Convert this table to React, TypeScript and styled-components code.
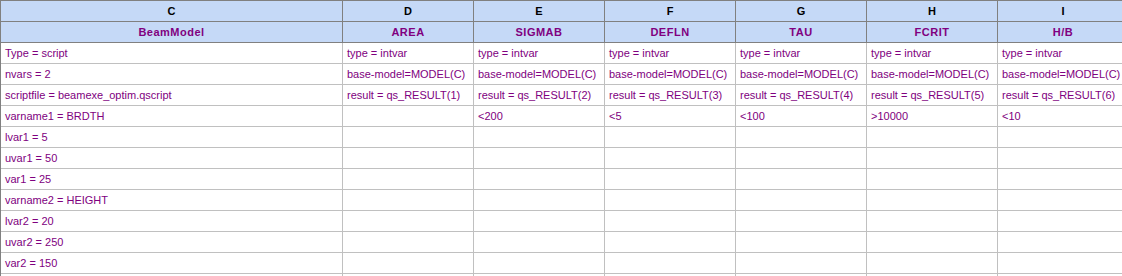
import React from 'react';
import styled, { createGlobalStyle } from 'styled-components';

const GlobalStyle = createGlobalStyle`
  html, body {
    margin: 0;
    padding: 0;
    background: #ffffff;
    overflow: hidden;
  }
`;

const columns = ['C', 'D', 'E', 'F', 'G', 'H', 'I'];
const titles = ['BeamModel', 'AREA', 'SIGMAB', 'DEFLN', 'TAU', 'FCRIT', 'H/B'];

const outputs = ['<200', '<5', '<100', '>10000', '<10'];

const buildRows = (): string[][] => {
  const model = [
    'Type = script',
    'nvars = 2',
    'scriptfile = beamexe_optim.qscript',
    'varname1 = BRDTH',
    'lvar1 = 5',
    'uvar1 = 50',
    'var1 = 25',
    'varname2 = HEIGHT',
    'lvar2 = 20',
    'uvar2 = 250',
    'var2 = 150',
    '',
  ];
  return model.map((first, r) => {
    const row = [first];
    for (let c = 1; c < columns.length; c++) {
      if (r === 0) row.push('type = intvar');
      else if (r === 1) row.push('base-model=MODEL(C)');
      else if (r === 2) row.push(`result = qs_RESULT(${c})`);
      else if (r === 3) row.push(c === 1 ? '' : outputs[c - 2]);
      else row.push('');
    }
    return row;
  });
};

const Sheet = () => {
  const rows = buildRows();
  return (
    <Grid>
      {columns.map((col) => (
        <ColHead key={col}>{col}</ColHead>
      ))}
      {titles.map((t) => (
        <TitleHead key={t}>{t}</TitleHead>
      ))}
      {rows.map((row, r) =>
        row.map((val, c) => <Cell key={r + '-' + c}>{val}</Cell>)
      )}
    </Grid>
  );
};

const App = () => {
  return (
    <>
      <GlobalStyle />
      <Sheet />
    </>
  );
};

const Grid = styled.div`
  display: grid;
  grid-template-columns: 342px repeat(6, 131px);
  grid-auto-rows: 21px;
  width: max-content;
  border-left: 1px solid #808080;
  border-top: 1px solid #808080;
  font-family: 'Liberation Sans', Arial, sans-serif;
  font-size: 11px;
`;

const HeadCell = styled.div`
  display: flex;
  align-items: center;
  justify-content: center;
  background: #c5d9f7;
  border-right: 1px solid #808080;
  border-bottom: 1px solid #808080;
  font-weight: bold;
  white-space: nowrap;
`;

const ColHead = styled(HeadCell)`
  color: #000000;
`;

const TitleHead = styled(HeadCell)`
  color: #800080;
  letter-spacing: 0.5px;
`;

const Cell = styled.div`
  display: flex;
  align-items: center;
  padding-left: 4px;
  color: #800080;
  border-right: 1px solid #c0c0c0;
  border-bottom: 1px solid #c0c0c0;
  white-space: nowrap;
  overflow: hidden;
`;

export default App;
